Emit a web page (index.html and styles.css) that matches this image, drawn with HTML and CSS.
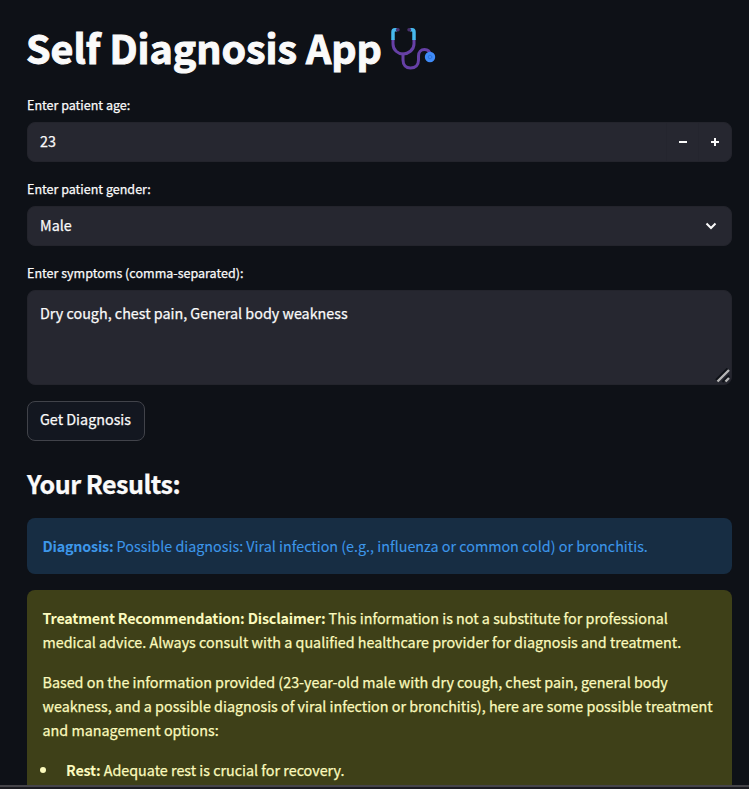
FILE: index.html
```html
<!DOCTYPE html>
<html lang="en">
<head>
<meta charset="utf-8">
<title>Self Diagnosis App</title>
<link rel="stylesheet" href="styles.css">
</head>
<body>
<main class="app">
  <h1 class="title"><span>Self Diagnosis App</span>
    <svg class="stethoscope" viewBox="0 0 46 44" fill="none" stroke-linecap="round">
      <path d="M2 12v4c0 6 5 10 10 10s11-4 11-10v-4" stroke="#6640a6" stroke-width="3"/>
      <path d="M12 26v6c0 5 3 8 7.500 8 5 0 8-3 8-8v-4c0-4 2.500-6.500 6-6.500 3.500 0 5.500 2.500 6 6" stroke="#6640a6" stroke-width="3"/>
      <path d="M6 1.800H4Q2 1.800 2 4v8M19 1.800h2Q23 1.800 23 4v8" stroke="#47b9ee" stroke-width="3.5" stroke-linecap="butt"/>
      <path d="M6.500 1.800h.5M18 1.800h.5" stroke="#49316f" stroke-width="3.500"/>
      <circle cx="39" cy="29" r="5.200" fill="#3f8bf8"/>
      <circle cx="39" cy="29" r="1.800" stroke="#2f74dd" stroke-width="1"/>
    </svg>
  </h1>
  <div class="label">Enter patient age:</div>
  <div class="field number">
    <span>23</span>
    <div class="step"><svg width="10" height="10" viewBox="0 0 10 10"><path d="M1 5h8" stroke="#fafafa" stroke-width="2"/></svg></div>
    <div class="step"><svg width="10" height="10" viewBox="0 0 10 10"><path d="M1 5h8M5 1v8" stroke="#fafafa" stroke-width="2"/></svg></div>
  </div>
  <div class="label">Enter patient gender:</div>
  <div class="field select">
    <span>Male</span>
    <svg width="12" height="8" viewBox="0 0 12 8"><path d="M1.500 1.500L6 6l4.500-4.500" fill="none" stroke="#fafafa" stroke-width="2"/></svg>
  </div>
  <div class="label">Enter symptoms (comma-separated):</div>
  <div class="field area">
    <span class="symptoms">Dry cough, chest pain, General body weakness</span>
    <svg class="grip" width="15" height="15" viewBox="0 0 15 15"><path d="M1 12L12.500.5M7.500 14L14 7.500" stroke="#0e1117" stroke-width="2"/><path d="M2.500 13.500L14 2M10.500 13.500L14 10" stroke="#b5b5b5" stroke-width="2.400"/></svg>
  </div>
  <button class="submit"><span>Get Diagnosis</span></button>
  <h3 class="subtitle"><span>Your Results:</span></h3>
  <section class="alert info"><p><span><b>Diagnosis:</b> Possible diagnosis: Viral infection (e.g., influenza or common cold) or bronchitis.</span></p></section>
  <section class="alert warning">
    <p><span><b>Treatment Recommendation:</b> <b>Disclaimer:</b> This information is not a substitute for professional</span><br><span>medical advice. Always consult with a qualified healthcare provider for diagnosis and treatment.</span></p>
    <p><span>Based on the information provided (23-year-old male with dry cough, chest pain, general body</span><br><span>weakness, and a possible diagnosis of viral infection or bronchitis), here are some possible treatment</span><br><span>and management options:</span></p>
    <ul><li><span><b>Rest:</b> Adequate rest is crucial for recovery.</span></li></ul>
  </section>
</main>
<div class="edge"></div>
</body>
</html>
```
FILE: styles.css
```css
* { box-sizing: border-box; }
body {
  margin: 0;
  height: 789px;
  overflow: hidden;
  background: #0e1117;
  color: #fafafa;
  font: 400 14.33px/24px "Noto Sans CJK SC", "Noto Sans", sans-serif;
  white-space: nowrap;
  -webkit-text-stroke: .25px;
}
.app { height: 785px; padding: 23px 17px 0 27px; overflow: hidden; }
.title {
  display: flex;
  align-items: center;
  gap: 8px;
  height: 53px;
  margin: 0 0 17px;
  font-size: 39.4px;
  line-height: 53px;
  font-weight: 700;
}
.title span { margin: -6px 1px 0 -1px; -webkit-text-stroke: 1px; }
.stethoscope { width: 46px; height: 44px; }
.label { height: 21px; margin-bottom: 8px; font-size: 12.54px; line-height: 24px; }
.field {
  display: flex;
  align-items: center;
  height: 40px;
  margin-bottom: 15px;
  padding-left: 12px;
  border: 1px solid #23242c;
  border-radius: 8px;
  background: #262730;
  line-height: 36px;
}
.field > span { flex: 1; margin-top: -2px; }
.number > span { margin-top: -3px; }
.step {
  display: flex;
  align-items: center;
  justify-content: center;
  width: 32px;
  height: 38px;
  border-left: 1px solid #24252e;
}
.number { padding-right: 1px; }
.select { padding-right: 14px; }
.area { position: relative; height: 95px; margin-bottom: 16px; align-items: flex-start; padding-top: 12px; line-height: 24px; }
.grip { position: absolute; right: 1px; bottom: 1px; }
.submit {
  display: block;
  width: 118px;
  height: 40px;
  padding: 0 1px 4px 0;
  border: 1px solid #41434a;
  border-radius: 8px;
  background: #131720;
  color: #fafafa;
  font: inherit;
  -webkit-text-stroke: inherit;
}
.subtitle { height: 34px; margin: 25px 0 18px; font-size: 25.1px; line-height: 34px; font-weight: 700; letter-spacing: -.53px; }
.alert { padding: 16px 15.5px; border-radius: 8px; }
.alert p { margin: 0 0 16px; }
.alert b { letter-spacing: -.2px; -webkit-text-stroke: 0; }
.info { height: 56px; margin-bottom: 16px; background: #172d43; color: #3d97ea; -webkit-text-stroke: .1px; }
.warning { height: 260px; background: #3e4018; color: #fbfabd; }
.warning ul { margin: 0; padding: 0; list-style: none; }
.warning li { display: flex; align-items: center; gap: 20px; margin-left: -2.5px; }
.warning li::before { content: ""; width: 6px; height: 6px; border-radius: 50%; background: currentColor; }
.edge { height: 4px; border-top: 2px solid #454449; background: #1b1b20; }
```
